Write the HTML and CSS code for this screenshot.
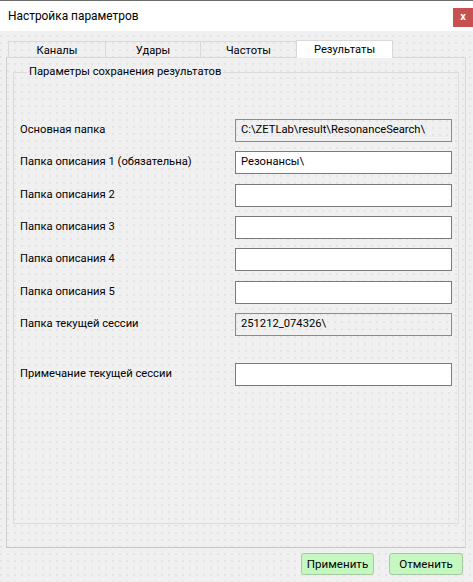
FILE: index.html
```html
<!DOCTYPE html>
<html lang="ru">
<head>
<meta charset="utf-8">
<title>Настройка параметров</title>
<link rel="stylesheet" href="styles.css">
</head>
<body>
<div class="window">
  <div class="topline"></div>
  <div class="titlebar">
    <span class="title">Настройка параметров</span>
    <span class="close">x</span>
  </div>
  <div class="client">
    <div class="tabs">
      <div class="tab t1">Каналы</div>
      <div class="tab t2">Удары</div>
      <div class="tab t3">Частоты</div>
      <div class="tab t4 active">Результаты</div>
    </div>
    <div class="panel">
      <fieldset class="group">
        <legend>Параметры сохранения результатов</legend>
        <div class="rows">
          <label class="lbl">Основная папка</label>
          <div class="field ro">C:\ZETLab\result\ResonanceSearch\</div>
          <label class="lbl">Папка описания 1 (обязательна)</label>
          <div class="field">Резонансы\</div>
          <label class="lbl">Папка описания 2</label>
          <div class="field"></div>
          <label class="lbl">Папка описания 3</label>
          <div class="field"></div>
          <label class="lbl">Папка описания 4</label>
          <div class="field"></div>
          <label class="lbl">Папка описания 5</label>
          <div class="field"></div>
          <label class="lbl">Папка текущей сессии</label>
          <div class="field ro">251212_074326\</div>
          <div class="spacer"></div>
          <label class="lbl">Примечание текущей сессии</label>
          <div class="field"></div>
        </div>
      </fieldset>
    </div>
    <div class="buttons">
      <button class="btn apply">Применить</button>
      <button class="btn cancel">Отменить</button>
    </div>
  </div>
</div>
</body>
</html>
```
FILE: styles.css
```css
* { box-sizing: border-box; }
html, body {
  margin: 0;
  padding: 0;
}
body {
  width: 473px;
  height: 582px;
  overflow: hidden;
  font-family: Roboto, "Liberation Sans", Arial, sans-serif;
  font-size: 11.2px;
  color: #000;
  background: #f0f0f0;
}
.window {
  width: 473px;
  height: 582px;
  background-color: #f0f0f0;
  background-image: radial-gradient(circle at 1px 1px, #dedede 0.6px, transparent 0.9px);
  background-size: 7px 7px;
}
.topline {
  height: 1px;
  background: #6b6b6b;
}
.titlebar {
  height: 30px;
  background: #fff;
  display: flex;
  justify-content: space-between;
  align-items: flex-start;
  padding-left: 8px;
}
.title {
  font-size: 11.9px;
  line-height: 30px;
}
.close {
  width: 20px;
  height: 19px;
  margin-top: 7px;
  background: #c75050;
  color: #fff;
  font-weight: bold;
  font-size: 11px;
  display: flex;
  align-items: center;
  justify-content: center;
  line-height: 1;
  padding-bottom: 2px;
}
.client {
  padding: 9px 7px 0 6px;
}
.tabs {
  display: flex;
  height: 18px;
  padding-left: 2px;
  align-items: flex-end;
  position: relative;
  z-index: 1;
  margin-bottom: -1px;
}
.tab {
  height: 17px;
  border: 1px solid #d9d9d9;
  border-bottom: none;
  margin-left: -1px;
  display: flex;
  align-items: center;
  justify-content: center;
  background-color: transparent;
  line-height: 1;
  padding-top: 1px;
}
.t1 { width: 98px; margin-left: 0; }
.t2 { width: 96px; }
.t3 { width: 97px; }
.t4 { width: 97px; }
.tab.active {
  height: 18px;
  background: #fff;
  border-color: #d9d9d9;
  padding-top: 0;
}
.panel {
  height: 491px;
  border: 1px solid #d9d9d9;
  border-bottom-color: #c6c6c6;
  border-left-color: #cfcfcf;
  padding: 7px 6px 0 6px;
}
.group {
  margin: 0;
  padding: 0 0 0 6px;
  height: 459px;
  border: 1px solid #dcdcdc;
  min-width: 0;
}
.group legend {
  margin-left: 7px;
  padding: 0 2px;
  line-height: 14px;
}
.rows {
  display: grid;
  grid-template-columns: 215px 217px;
  grid-template-rows: repeat(7, 23px) 8.34px 23px;
  row-gap: 9.33px;
  align-items: center;
  margin-top: 40px;
}
.lbl {
  line-height: 14px;
  margin-top: -1px;
}
.spacer {
  grid-column: 1 / -1;
  height: 8.34px;
}
.field {
  height: 23px;
  border: 1px solid #7a7a7a;
  background: #fff;
  padding: 0 5px;
  line-height: 19px;
  white-space: nowrap;
  overflow: hidden;
}
.field.ro {
  background: #f0f0f0;
  background-image: radial-gradient(circle at 1px 1px, #dedede 0.6px, transparent 0.9px);
  background-size: 7px 7px;
  border-color: #8a8a8a;
}
.buttons {
  display: flex;
  justify-content: flex-end;
  gap: 15px;
  margin-top: 5px;
  padding-right: 3px;
}
.btn {
  height: 22px;
  border: 1px solid #a8c8a4;
  border-radius: 3px;
  background: #c5f7c0;
  font-family: inherit;
  font-size: 11.6px;
  color: #000;
  padding: 0;
}
.apply { width: 73px; }
.cancel { width: 74px; }
```
